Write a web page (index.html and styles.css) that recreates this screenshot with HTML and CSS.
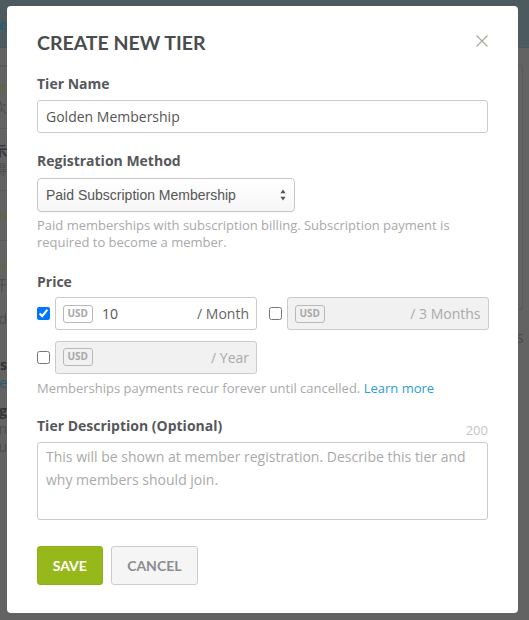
FILE: index.html
```html
<!DOCTYPE html>
<html lang="en">
<head>
<meta charset="utf-8">
<title>Create New Tier</title>
<link rel="stylesheet" href="styles.css">
</head>
<body>
<div class="page">
  <div class="page-header">
    <div class="edge-left"><span class="hdr-text">Home</span></div>
  </div>
  <div class="page-body">
    <div class="edge-left">
      <div class="bg-row"></div>
      <div class="bg-row"><span class="t-green">1</span><span class="t-gray">欢</span></div>
      <div class="bg-row"><span class="t-dark">示</span><span class="t-gray">得</span></div>
      <div class="bg-row short"><span class="t-green">'n</span></div>
      <div class="bg-row tall"><span class="t-green">ar</span><span class="t-gray">开</span></div>
      <div class="bg-row plain"><span class="t-gray">d</span></div>
      <div class="bg-row plain"><span class="t-dark">es</span><span class="t-blue">e</span></div>
      <div class="bg-row plain"><span class="t-dark">eg</span><span class="t-gray">n</span><span class="t-gray">u</span></div>
    </div>
    <div class="spacer"></div>
    <div class="edge-right">
      <div class="bg-card"></div>
      <div class="bg-s">s</div>
    </div>
  </div>
</div>

<div class="modal">
  <div class="modal-head">
    <h1 class="modal-title">Create New Tier</h1>
    <svg class="close-icon" width="12" height="12" viewBox="0 0 12 12" aria-hidden="true">
      <path d="M0.5 0.5 L11.5 11.5 M11.5 0.5 L0.5 11.5" stroke="#aaa49a" stroke-width="1.1" fill="none"/>
    </svg>
  </div>

  <div class="group g-name">
    <label class="label">Tier Name</label>
    <input class="text-input" type="text" value="Golden Membership">
  </div>

  <div class="group g-method">
    <label class="label">Registration Method</label>
    <div class="select">
      <span class="select-text">Paid Subscription Membership</span>
      <svg class="select-arrows" width="6" height="12" viewBox="0 0 6 12" aria-hidden="true">
        <path d="M3 0.5 L5.6 4.2 L0.4 4.2 Z" fill="#555"/>
        <path d="M3 11.5 L5.6 7.8 L0.4 7.8 Z" fill="#555"/>
      </svg>
    </div>
    <p class="help help-method">Paid memberships with subscription billing. Subscription payment is required to become a member.</p>
  </div>

  <div class="group g-price">
    <label class="label">Price</label>
    <div class="price-grid">
      <div class="price-opt">
        <input class="check" type="checkbox" checked>
        <div class="price-box">
          <span class="usd">USD</span>
          <span class="amount">10</span>
          <span class="period">/ Month</span>
        </div>
      </div>
      <div class="price-opt">
        <input class="check" type="checkbox">
        <div class="price-box disabled">
          <span class="usd">USD</span>
          <span class="amount"></span>
          <span class="period">/ 3 Months</span>
        </div>
      </div>
      <div class="price-opt">
        <input class="check" type="checkbox">
        <div class="price-box disabled">
          <span class="usd">USD</span>
          <span class="amount"></span>
          <span class="period">/ Year</span>
        </div>
      </div>
    </div>
    <p class="help help-price">Memberships payments recur forever until cancelled. <a class="link" href="#">Learn more</a></p>
  </div>

  <div class="group g-desc">
    <div class="label-row">
      <label class="label">Tier Description (Optional)</label>
      <span class="counter">200</span>
    </div>
    <textarea class="textarea" placeholder="This will be shown at member registration. Describe this tier and why members should join."></textarea>
  </div>

  <div class="actions">
    <button class="btn btn-save" type="button">Save</button>
    <button class="btn btn-cancel" type="button">Cancel</button>
  </div>
</div>
</body>
</html>
```

FILE: styles.css
```css
* { box-sizing: border-box; }

html, body {
  margin: 0;
  padding: 0;
  height: 100%;
}

body {
  background: #636363;
  font-family: "Open Sans", "Liberation Sans", sans-serif;
  overflow: hidden;
}

/* ---------- dimmed page behind the modal ---------- */
.page {
  height: 620px;
  display: flex;
  flex-direction: column;
}

.page-header {
  height: 48px;
  background: #4d5a5f;
  border-bottom: 1px solid #46585f;
  display: flex;
}

.hdr-text {
  color: #2e5f70;
  font-size: 15px;
  font-weight: 700;
  line-height: 48px;
}

.page-body {
  flex: 1;
  display: flex;
}

.spacer { flex: 1; }

.edge-left {
  width: 7px;
  overflow: hidden;
  display: flex;
  flex-direction: column;
  align-items: flex-end;
}

.page-body .edge-left {
  padding-top: 17px;
}

.bg-row {
  width: 60px;
  height: 62px;
  border-top: 1px solid #5a5a5a;
  display: flex;
  flex-direction: column;
  align-items: flex-end;
  justify-content: center;
  font-size: 14px;
  line-height: 18px;
}

.bg-row:first-child { height: 0; }
.bg-row.short { height: 50px; }
.bg-row.tall { height: 70px; }
.bg-row.plain { border-top: 0; height: 46px; justify-content: flex-start; }

.t-green { color: #5b6a2a; }
.t-gray { color: #4d4d4d; }
.t-dark { color: #333; font-weight: 700; }
.t-blue { color: #2e5a70; }

.edge-right {
  width: 11px;
  overflow: hidden;
  padding-top: 17px;
}

.bg-card {
  width: 5px;
  height: 245px;
  border: 1px solid #5a5a5a;
  border-left: 0;
  border-radius: 0 3px 3px 0;
}

.bg-s {
  color: #4a4a4a;
  font-size: 16px;
  margin-top: 16px;
  margin-left: -2px;
}

/* ---------- modal ---------- */
.modal {
  position: absolute;
  top: 6px;
  left: 7px;
  width: 511px;
  height: 607px;
  background: #fff;
  border-radius: 4px;
  padding: 25px 30px 0 30px;
  color: #555;
}

.modal-head {
  display: flex;
  justify-content: space-between;
  align-items: flex-start;
  margin-bottom: 19px;
}

.modal-title {
  margin: 0;
  font-family: "Lato", "Liberation Sans", sans-serif;
  font-weight: 700;
  font-size: 19.5px;
  line-height: 24px;
  text-transform: uppercase;
  color: #4a4c50;
}

.close-icon {
  margin-top: 4px;
  display: block;
}

.group { display: flex; flex-direction: column; }

.label {
  display: block;
  font-weight: 700;
  font-size: 14px;
  line-height: 20px;
  color: #56585b;
}

.g-name { margin-bottom: 17.6px; }
.g-name .label { margin-bottom: 6px; }

.text-input {
  height: 33px;
  border: 1px solid #cbcbcb;
  border-radius: 3px;
  padding: 0 8px;
  font-family: "Open Sans", "Liberation Sans", sans-serif;
  font-size: 14px;
  color: #555;
  background: #fff;
  outline: none;
}

.g-method { margin-bottom: 21.4px; }
.g-method .label { margin-bottom: 7px; }

.select {
  width: 257.5px;
  height: 34px;
  border: 1px solid #c8c8c8;
  border-radius: 4px;
  background: linear-gradient(#ffffff, #f6f6f6);
  display: flex;
  align-items: center;
  justify-content: space-between;
  padding: 0 8px 0 8px;
  box-shadow: 0 1px 1px rgba(0,0,0,0.04);
}

.select-text {
  font-family: "Liberation Sans", Arial, sans-serif;
  font-size: 14px;
  color: #555;
}

.select-arrows { display: block; margin-top: 1px; }

.help {
  margin: 0;
  font-size: 13px;
  line-height: 17px;
  color: #a9a9a9;
}

.help-method { margin-top: 5px; }

.g-price { margin-bottom: 19px; }
.g-price .label { margin-bottom: 5.4px; }

.price-grid {
  display: grid;
  grid-template-columns: 220px 219.5px;
  column-gap: 12px;
  row-gap: 10.2px;
}

.price-opt {
  display: flex;
  align-items: center;
  gap: 5px;
}

.check {
  margin: 0;
  width: 13px;
  height: 13px;
  flex: none;
}

.price-box {
  flex: 1;
  height: 33px;
  border: 1px solid #cbcbcb;
  border-radius: 3px;
  background: #fff;
  display: flex;
  align-items: center;
  padding: 0 7px;
}

.price-box.disabled { background: #f1f1f1; }

.usd {
  flex: none;
  width: 29.5px;
  height: 17.5px;
  border: 1px solid #b8b8b8;
  border-radius: 3px;
  font-size: 10px;
  font-weight: 700;
  line-height: 15.5px;
  text-align: center;
  color: #a8a8a8;
}

.amount {
  flex: 1;
  margin-left: 9.5px;
  font-size: 14px;
  color: #555;
}

.period {
  font-size: 14px;
  color: #666;
}

.disabled .period { color: #aaa; }

.help-price { margin-top: 6px; }

.link {
  color: #2b9cd8;
  text-decoration: none;
}

.g-desc { margin-bottom: 26.4px; }

.label-row {
  display: flex;
  justify-content: space-between;
  align-items: flex-end;
  height: 20px;
  margin-bottom: 6.4px;
}

.counter {
  font-size: 13px;
  line-height: 17px;
  color: #c6c6c6;
  margin-bottom: -3px;
}

.textarea {
  display: block;
  width: 100%;
  height: 78px;
  border: 1px solid #cbcbcb;
  border-radius: 3px;
  padding: 3px 8px;
  resize: none;
  font-family: "Open Sans", "Liberation Sans", sans-serif;
  font-size: 14px;
  line-height: 22.6px;
  color: #555;
  outline: none;
}

.textarea::placeholder { color: #aaa; }

.actions {
  display: flex;
  gap: 8.4px;
}

.btn {
  height: 39px;
  border-radius: 3px;
  font-family: "Lato", "Liberation Sans", sans-serif;
  font-weight: 700;
  font-size: 14px;
  text-transform: uppercase;
  cursor: pointer;
  padding: 0;
}

.btn-save {
  width: 65.6px;
  background: #96b81a;
  border: 1px solid #8fb017;
  color: #fff;
}

.btn-cancel {
  width: 86.7px;
  background: #f5f5f5;
  border: 1px solid #cccccc;
  color: #8a8c8f;
}
```
